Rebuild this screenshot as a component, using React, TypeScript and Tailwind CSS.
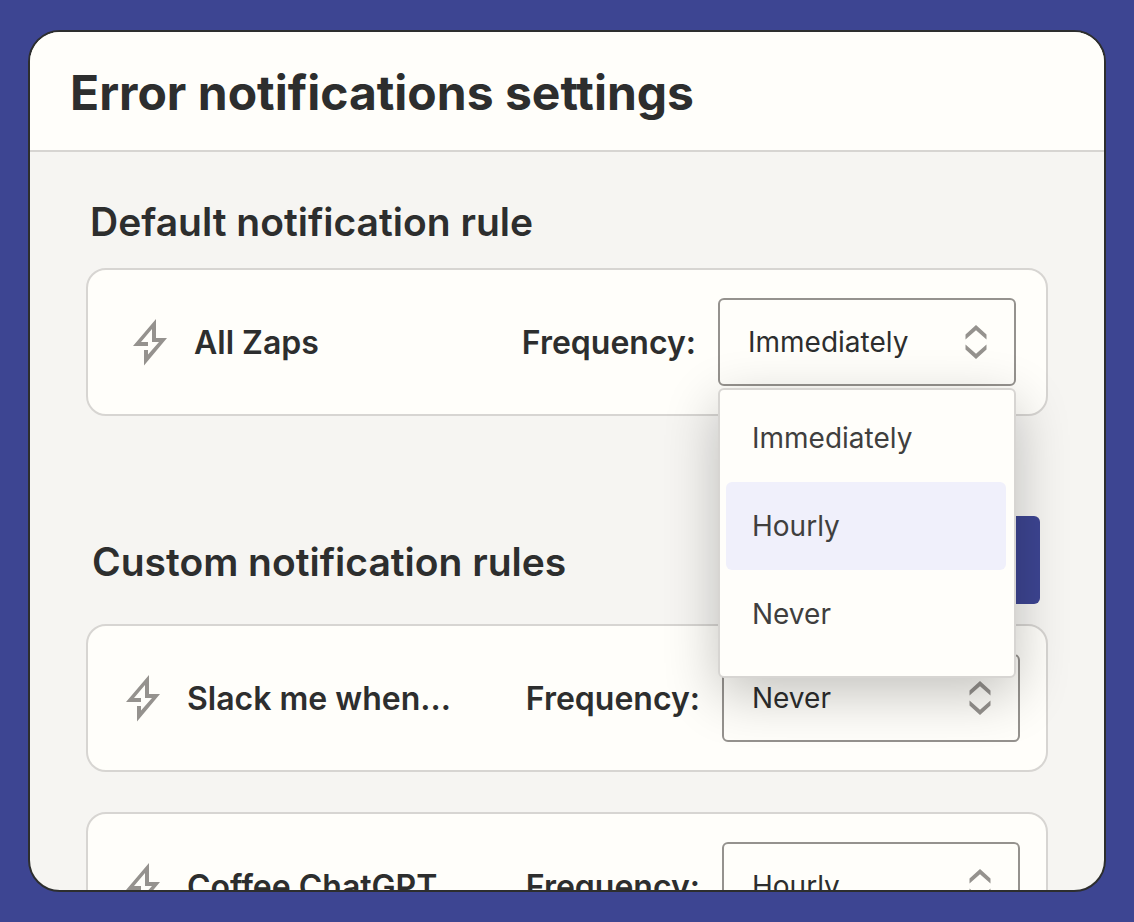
import { useState } from "react";

const FREQUENCIES = ["Immediately", "Hourly", "Never"];

function ZapIcon() {
  return (
    <svg className="h-[47px] w-[34px] shrink-0 fill-[#95928e]" viewBox="0 0 34 47" aria-hidden="true">
      <path d="M23 0V19H34L11 46.5V31H15V35.5L26 23H19V10L8 23H15V27H0Z" />
    </svg>
  );
}

function SortIcon() {
  return (
    <svg
      className="pointer-events-none absolute top-[27px] right-[29px] h-[34px] w-[22px] fill-[#95928e]"
      viewBox="0 0 22 34"
      aria-hidden="true"
    >
      <path d="M.5 9.5 11 0 21.5 9.5V14.5L11 5.2.5 14.5ZM.5 19.5 11 28.8 21.5 19.5V24.5L11 34 .5 24.5Z" />
    </svg>
  );
}

function FrequencyMenu({ active, onPick }: { active: string; onPick: (value: string) => void }) {
  return (
    <ul className="absolute top-full left-0 z-10 mt-0.5 w-full rounded-md border-2 border-[#d7d5d2] bg-[#fffefa] pt-1 pr-2 pb-[18px] pl-1.5 shadow-[0_16px_54px_rgba(0,0,0,0.24)]">
      {FREQUENCIES.map((name) => (
        <li key={name}>
          <button
            type="button"
            onClick={() => onPick(name)}
            className={`h-[88px] w-full rounded-md px-[26px] text-left text-[28px] text-[#403f3e] ${
              name === active ? "bg-[#f0f0fb]" : ""
            }`}
          >
            {name}
          </button>
        </li>
      ))}
    </ul>
  );
}

type RuleProps = { id: string; name: string; initial: string; primary?: boolean };

function RuleCard({ id, name, initial, primary = false }: RuleProps) {
  const [value, setValue] = useState(initial);
  const [open, setOpen] = useState(primary);
  return (
    <div
      className={`flex items-center rounded-[20px] border-2 border-[#d7d5d2] bg-[#fffefa] py-7 ${
        primary ? "pr-[30px] pl-[45px]" : "pr-[26px] pl-[38px]"
      }`}
    >
      <ZapIcon />
      <span className="ml-[27px] flex-1 pt-0.5 text-[32px] font-semibold">{name}</span>
      <label htmlFor={id} className="mr-[22px] pt-0.5 text-[32px] font-semibold">
        Frequency:
      </label>
      <div className="relative w-[298px]">
        <select
          id={id}
          value={value}
          onChange={(e) => setValue(e.target.value)}
          className="h-[88px] w-full appearance-none rounded-md border-2 border-[#95928e] bg-transparent px-7 text-[28px]"
        >
          {FREQUENCIES.map((f) => (
            <option key={f}>{f}</option>
          ))}
        </select>
        <SortIcon />
        {open && (
          <FrequencyMenu
            active="Hourly"
            onPick={(picked) => {
              setValue(picked);
              setOpen(false);
            }}
          />
        )}
      </div>
    </div>
  );
}

export default function App() {
  return (
    <div className="h-screen bg-[#3d4592] px-7 py-[30px] font-['Inter',sans-serif] text-[#2d2e2e]">
      <main className="h-full overflow-hidden rounded-[32px] border-2 border-[#2d2e2e] bg-[#f6f5f2]">
        <header className="border-b-2 border-[#d7d5d2] bg-[#fffefa] px-10 pt-[34px] pb-[30px]">
          <h1 className="text-5xl leading-[54px] font-bold">Error notifications settings</h1>
        </header>
        <div className="px-14 pt-[46px]">
          <section>
            <h2 className="mb-[22px] pl-1 text-[39px] leading-[48px] font-semibold">Default notification rule</h2>
            <RuleCard id="all-zaps" name="All Zaps" initial="Immediately" primary />
          </section>
          <section className="mt-[100px]">
            <div className="mb-5 flex items-center justify-between pr-2 pl-1.5">
              <h2 className="pt-1 text-[39px] leading-[48px] font-semibold">Custom notification rules</h2>
              <button type="button" aria-label="Add rule" className="h-[88px] w-[280px] rounded-md bg-[#3d4592]" />
            </div>
            <div className="flex flex-col gap-10">
              <RuleCard id="slack" name="Slack me when..." initial="Never" />
              <RuleCard id="coffee" name="Coffee ChatGPT" initial="Hourly" />
            </div>
          </section>
        </div>
      </main>
    </div>
  );
}
